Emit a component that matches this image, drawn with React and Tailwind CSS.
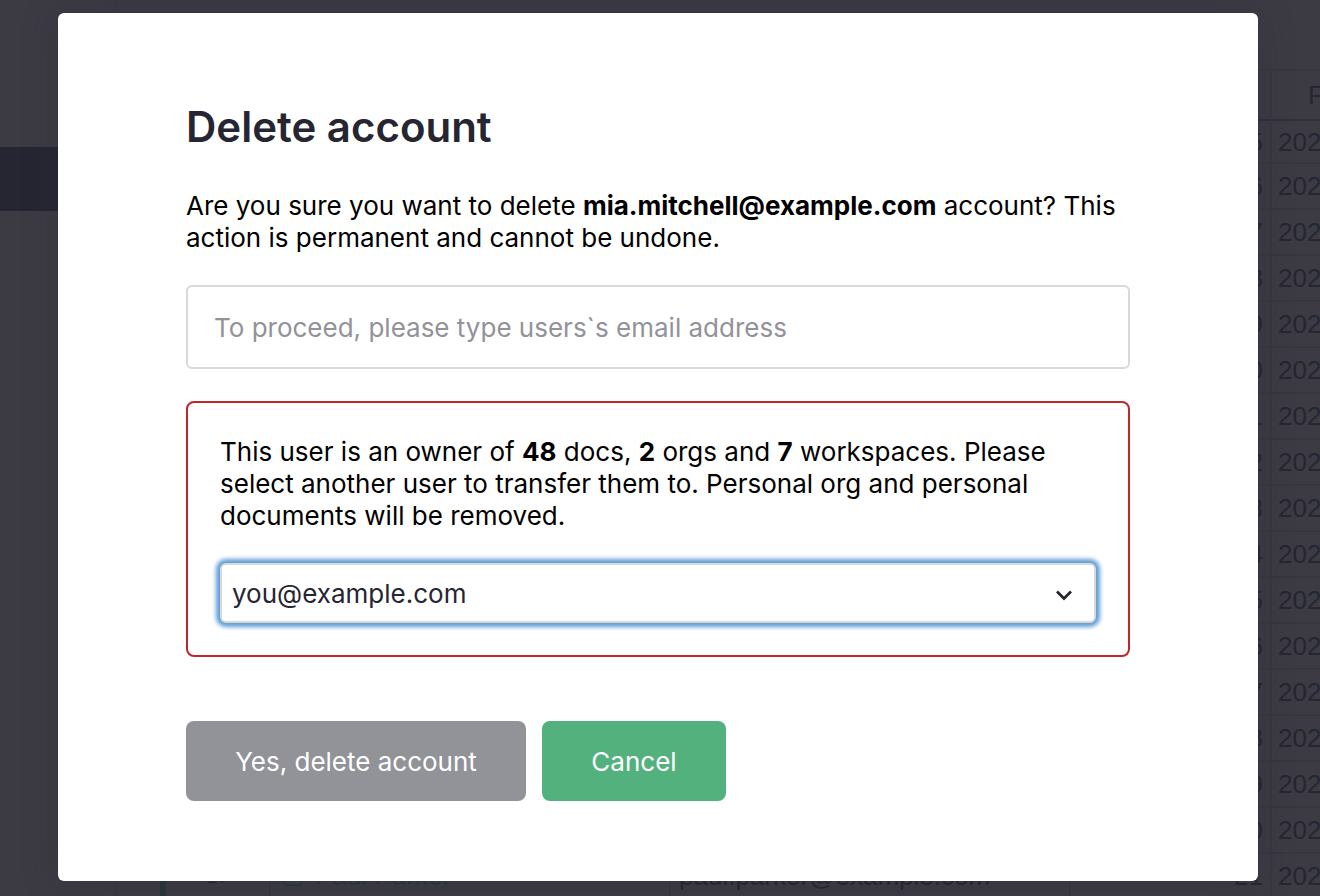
import { useState } from "react";
import { ChevronDown } from "lucide-react";

const rows = [
  { id: 1, count: 5 },
  { id: 2, count: 6 },
  { id: 3, count: 7 },
  { id: 4, count: 8 },
  { id: 5, count: 9 },
  { id: 6, count: 10 },
  { id: 7, count: 11 },
  { id: 8, count: 12 },
  { id: 9, count: 13 },
  { id: 10, count: 14 },
  { id: 11, count: 15 },
  { id: 12, count: 16 },
  { id: 13, count: 17 },
  { id: 14, count: 18 },
  { id: 15, count: 19 },
  { id: 16, count: 20 },
  { id: 17, count: 21, name: "Paul Parker", email: "paul.parker@example.com" },
];

function Sidebar() {
  return (
    <nav className="w-[116px] shrink-0 border-r border-[#383743] pt-[147px]">
      <div className="h-16 bg-[#262633]" />
    </nav>
  );
}

function UsersTable() {
  return (
    <table className="w-[1360px] table-fixed border-collapse text-[26px] leading-8 text-[#262633]">
      <colgroup>
        <col className="w-[104px]" />
        <col className="w-[400px]" />
        <col className="w-[400px]" />
        <col className="w-[201px]" />
        <col className="w-[255px]" />
      </colgroup>
      <thead>
        <tr className="h-[50px] border-t-2 border-b-2 border-t-[#373641] border-b-[#302f3a]">
          <th className="border-r-2 border-[#373641]" />
          <th className="border-r-2 border-[#373641]" />
          <th className="border-r-2 border-[#373641]" />
          <th className="border-r-2 border-[#373641]" />
          <th className="pr-0 pl-9 text-left font-normal">First login</th>
        </tr>
      </thead>
      <tbody>
        {rows.map((row) => (
          <tr key={row.id} className="h-[46px] border-b-2 border-[#373641] first:h-[43px]">
            <td className="border-r-2 border-[#373641] text-center text-xl">
              {row.name ? row.id : null}
            </td>
            <td className="border-r-2 border-[#373641] px-3 text-[#2b3640]">
              {row.name && (
                <div className="flex items-center gap-3">
                  <span className="size-5 rounded-sm border-2 border-[#2b3640]" />
                  {row.name}
                </div>
              )}
            </td>
            <td className="border-r-2 border-[#373641] px-2">{row.email}</td>
            <td className="border-r-2 border-[#373641] pr-[7px] text-right">{row.count}</td>
            <td className="px-1.5">2023</td>
          </tr>
        ))}
      </tbody>
    </table>
  );
}

function DeleteAccountDialog() {
  const [email, setEmail] = useState("");
  const [newOwner, setNewOwner] = useState("you@example.com");

  return (
    <div
      role="dialog"
      aria-modal="true"
      aria-labelledby="delete-title"
      className="w-full max-w-[1200px] rounded-md bg-white px-32 pt-[82px] pb-20 text-[26px] leading-8 text-black shadow-[0_0_36px_#26263340]"
    >
      <h1
        id="delete-title"
        className="mb-[31px] text-[42px] leading-16 font-semibold text-[#262633]"
      >
        Delete account
      </h1>
      <p className="mb-[31px]">
        Are you sure you want to delete <b>mia.mitchell@example.com</b> account? This action is
        permanent and cannot be undone.
      </p>
      <input
        type="text"
        aria-label="User's email address"
        placeholder="To proceed, please type users`s email address"
        value={email}
        onChange={(e) => setEmail(e.target.value)}
        className="mb-8 block h-[84px] w-full rounded-md border-2 border-[#d9d9d9] px-[26px] outline-none placeholder:text-[#929299]"
      />
      <div className="mb-16 rounded-lg border-2 border-[#c0262c] px-8 pt-[33px] pb-8">
        <label htmlFor="new-owner" className="mb-[31px] block">
          This user is an owner of <b>48</b> docs, <b>2</b> orgs and <b>7</b> workspaces. Please
          select another user to transfer them to. Personal org and personal documents will be
          removed.
        </label>
        <div className="relative">
          <select
            id="new-owner"
            value={newOwner}
            onChange={(e) => setNewOwner(e.target.value)}
            className="block h-[60px] w-full appearance-none rounded-md border-2 border-[#d9d9d9] bg-white px-2.5 pt-0.5 text-[#262633] shadow-[0_0_4px_4px_#5e9ed6] outline-none"
          >
            <option value="you@example.com">you@example.com</option>
          </select>
          <ChevronDown
            className="pointer-events-none absolute top-[18px] right-[18px] size-7 text-[#262633]"
            strokeWidth={2.4}
            strokeLinecap="butt"
            strokeLinejoin="miter"
          />
        </div>
      </div>
      <div className="flex gap-4">
        <button type="button" className="h-20 w-[340px] rounded-lg bg-[#929299] pt-0.5 text-white">
          Yes, delete account
        </button>
        <button type="button" className="h-20 w-[184px] rounded-lg bg-[#53b17e] pt-0.5 text-white">
          Cancel
        </button>
      </div>
    </div>
  );
}

export default function App() {
  return (
    <div className="relative h-screen overflow-hidden bg-[#3c3b44] font-['Inter',sans-serif]">
      <div className="flex h-full font-['Liberation_Sans',sans-serif]" aria-hidden="true">
        <Sidebar />
        <div className="mt-[119px] w-[50px] shrink-0 border-r-6 border-[#26383c]" />
        <div className="min-w-0 flex-1 overflow-hidden pt-[69px]">
          <UsersTable />
        </div>
      </div>
      <div className="absolute inset-0 flex items-start justify-center pt-[13px] pr-1">
        <DeleteAccountDialog />
      </div>
    </div>
  );
}
